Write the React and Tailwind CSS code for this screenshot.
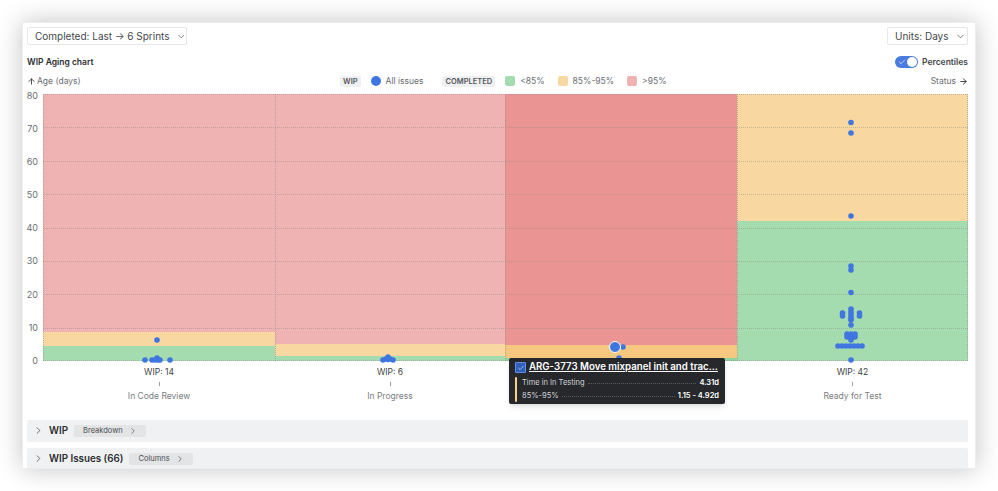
import { ArrowRight, ArrowUp, Check, ChevronDown, ChevronRight } from "lucide-react";

const H = 267;
const W = 925;
const toY = (v) => H - (v / 80) * H;

const columns = [
  { x: 0, w: 232, green: 15, amber: 29, red: "#f0b3b3", amberFill: "#f8d8a0", greenFill: "#a4dcb0" },
  { x: 232, w: 230, green: 5, amber: 17, red: "#f0b3b3", amberFill: "#f8d8a0", greenFill: "#a4dcb0" },
  { x: 462, w: 232, green: 3, amber: 16, red: "#ea9593", amberFill: "#f6c87f", greenFill: "#8fd49f" },
  { x: 694, w: 231, green: 140, amber: 267, red: "#f0b3b3", amberFill: "#f8d8a0", greenFill: "#a4dcb0" },
];

// dots in plot coordinates (page x - 43, page y - 94)
const dots = [
  [114, 246], [102, 266], [109, 266], [112, 266], [114, 264], [115, 266], [117, 266], [127, 266],
  [340, 266], [343, 265], [345, 263], [345, 265.5], [347, 265], [350, 266],
  [580, 253], [576, 264],
  [808, 28.5], [808, 39], [808, 122], [808, 172], [808, 176], [808, 198.5],
  [808, 215], [808, 218], [808, 221], [808, 224], [808, 226], [799.5, 219], [799.5, 222], [816.5, 219], [816.5, 222], [808, 231],
  [804, 240], [808, 240], [812, 240], [804, 243], [808, 243], [812, 243], [808, 246],
  [795, 252], [799, 252], [803, 252], [807, 252], [811, 252], [815, 252], [819, 252], [808, 266],
];

// the third column's label sits behind the tooltip
const labels = [
  { wip: "WIP: 14", name: "In Code Review" },
  { wip: "WIP: 6", name: "In Progress" },
  null,
  { wip: "WIP: 42", name: "Ready for Test" },
];

function Dropdown({ label, className }) {
  return (
    <button className={`h-[18px] flex items-center pl-[7px] gap-[6px] whitespace-nowrap bg-white border border-[#e6e7e9] rounded-[2px] text-[10px] text-[#44474c] ${className}`}>
      {label}
      <ChevronDown size={11} strokeWidth={1.5} />
    </button>
  );
}

function Swatch({ color, label }) {
  return (
    <div className="flex items-center gap-[5px]">
      <span className={`w-[10px] h-[10px] rounded-[2px] ${color}`} />
      <span>{label}</span>
    </div>
  );
}

function Section({ title, action }) {
  return (
    <div className="h-[22px] shrink-0 flex items-center pl-[6px] bg-[#f0f1f2] rounded-[2px]">
      <ChevronRight size={11} strokeWidth={1.5} className="text-[#333]" />
      <span className="ml-[5px] pt-[2px] text-[9.8px] font-semibold text-[#2b2d31]">{title}</span>
      <span className="ml-[6px] mt-[1px] h-[12px] pl-[9px] pr-[8px] flex items-center gap-[5px] bg-[#e3e4e6] rounded-[2px] text-[7.5px] text-[#4a4d52]">
        {action}
        <ChevronRight size={10} strokeWidth={1.5} className="text-[#444]" />
      </span>
    </div>
  );
}

function Plot() {
  return (
    <svg width={W} height={H} viewBox={`0 0 ${W} ${H}`} className="block shrink-0 overflow-visible">
      {columns.map((c) => (
        <g key={c.x}>
          <rect x={c.x} y={0} width={c.w} height={H} fill={c.red} />
          <rect x={c.x} y={H - c.amber} width={c.w} height={c.amber} fill={c.amberFill} />
          <rect x={c.x} y={H - c.green} width={c.w} height={c.green} fill={c.greenFill} />
        </g>
      ))}
      {[0, 10, 20, 30, 40, 50, 60, 70, 80].map((v) => {
        const y = Math.min(Math.round(toY(v)) + 0.5, H - 0.5);
        return <line key={v} x1={0} x2={W} y1={y} y2={y} stroke="#8a8a8a" strokeOpacity="0.45" strokeDasharray="1 1" />;
      })}
      {[0.5, 232.5, 462.5, 694.5, 924.5].map((x) => (
        <line key={x} x1={x} x2={x} y1={0} y2={H} stroke="#8a8a8a" strokeOpacity="0.55" strokeDasharray="1 1" />
      ))}
      {dots.map(([x, y], i) => (
        <circle key={i} cx={x} cy={y} r={2.8} fill="#3f76e0" />
      ))}
      <circle cx={572} cy={253} r={5.5} fill="#3f76e0" stroke="#fff" strokeWidth={1} />
    </svg>
  );
}

export default function App() {
  return (
    <div className="w-[998px] h-[491px] bg-white overflow-hidden pt-[22px] pl-[22px] font-['Inter',sans-serif]">
      <div className="w-[954px] h-[447px] bg-white border border-[#eceded] shadow-[0_0_24px_rgba(0,0,0,0.24)] overflow-hidden pt-[4px] pl-[4px] pr-[7px] flex flex-col">
        <div className="flex justify-between">
          <Dropdown label="Completed: Last → 6 Sprints" className="w-[160px]" />
          <Dropdown label="Units: Days" className="w-[81px]" />
        </div>

        <div className="mt-[11px] h-[14px] flex items-center justify-between">
          <span className="text-[8.5px] font-semibold text-[#2b2d31]">WIP Aging chart</span>
          <div className="flex items-center gap-[4px]">
            <span className="w-[23px] h-[12px] rounded-full bg-[#4a7ce0] flex items-center justify-between pl-[3px] pr-[1px]">
              <Check size={8} strokeWidth={2} className="text-white" />
              <span className="w-[10px] h-[10px] rounded-full bg-white" />
            </span>
            <span className="text-[8.5px] font-semibold text-[#44474c]">Percentiles</span>
          </div>
        </div>

        <div className="mt-[6px] h-[14px] flex items-center text-[8.5px] text-[#6b6e73]">
          <div className="w-[313px] flex items-center gap-[1px]">
            <ArrowUp size={9} strokeWidth={2.5} className="text-[#444]" />
            <span>Age (days)</span>
          </div>
          <div className="flex items-center">
            <span className="px-[3px] h-[11px] flex items-center bg-[#eff0f1] rounded-[2px] text-[7.5px] font-semibold text-[#55585d]">WIP</span>
            <span className="ml-[10px] w-[10px] h-[10px] rounded-full bg-[#3f76e0]" />
            <span className="ml-[5px]">All issues</span>
            <span className="ml-[19px] px-[3px] h-[11px] flex items-center bg-[#eff0f1] rounded-[2px] text-[7.5px] font-semibold text-[#55585d]">COMPLETED</span>
            <div className="ml-[10px] flex items-center gap-[13px]">
              <Swatch color="bg-[#a4dcb0]" label="<85%" />
              <Swatch color="bg-[#f8d8a0]" label="85%-95%" />
              <Swatch color="bg-[#f0b3b3]" label=">95%" />
            </div>
          </div>
          <div className="ml-auto flex items-center gap-[3px]">
            <span>Status</span>
            <ArrowRight size={9} strokeWidth={2.5} className="text-[#333]" />
          </div>
        </div>

        <div className="relative mt-[6px] flex">
          <div className="w-[16px] h-[267px] flex flex-col justify-between items-end shrink-0 text-[9px] text-[#6b6e73]">
            {[80, 70, 60, 50, 40, 30, 20, 10, 0].map((v) => (
              <span key={v} className="h-0 pt-[2px] flex items-center justify-end w-[16px] pr-[5px]">{v}</span>
            ))}
          </div>
          <div className="w-[925px]">
            <Plot />
            <div className="grid grid-cols-[232px_230px_232px_231px] h-[41px] text-center text-[8.5px]">
              {labels.map((l, i) =>
                l ? (
                  <div key={i} className="flex flex-col items-center pt-[5px]">
                    <span className="h-[12px] leading-[12px] text-[#3c3f44]">{l.wip}</span>
                    <span className="mt-[4px] w-px h-[4px] bg-[#9a9a9a]" />
                    <span className="mt-[4px] h-[12px] leading-[12px] text-[#7a7d82]">{l.name}</span>
                  </div>
                ) : (
                  <div key={i} />
                )
              )}
            </div>
          </div>

          <div className="absolute left-[482px] top-[264px] w-[216px] h-[46px] bg-[#26282c] rounded-[2px] shadow-md text-white px-[6px] pt-[2px]">
            <div className="flex items-center gap-[3px] h-[16px]">
              <span className="w-[11px] h-[11px] shrink-0 rounded-[1px] bg-[#2f5fb8] border border-[#5f8fe8] flex items-center justify-center">
                <Check size={8} strokeWidth={2} className="text-[#c9dcff]" />
              </span>
              <span className="text-[9.7px] font-semibold underline whitespace-nowrap">ARG-3773 Move mixpanel init and trac...</span>
            </div>
            <div className="flex gap-[5px] mt-[1px]">
              <span className="w-[2px] h-[25px] bg-[#f8d08a] rounded-full shrink-0" />
              <div className="flex-1 text-[7.5px] text-[#d5d6d8]">
                <div className="flex items-center h-[13px]">
                  <span>Time in In Testing</span>
                  <span className="flex-1 mx-[3px] border-b border-dotted border-[#5a5c60]" />
                  <span className="font-semibold text-white">4.31d</span>
                </div>
                <div className="flex items-center h-[13px]">
                  <span>85%-95%</span>
                  <span className="flex-1 mx-[3px] border-b border-dotted border-[#5a5c60]" />
                  <span className="font-semibold text-white">1.15 - 4.92d</span>
                </div>
              </div>
            </div>
          </div>
        </div>

        <div className="mt-[18px] flex flex-col gap-[6px]">
          <Section title="WIP" action="Breakdown" />
          <Section title="WIP Issues (66)" action="Columns" />
        </div>
      </div>
    </div>
  );
}
